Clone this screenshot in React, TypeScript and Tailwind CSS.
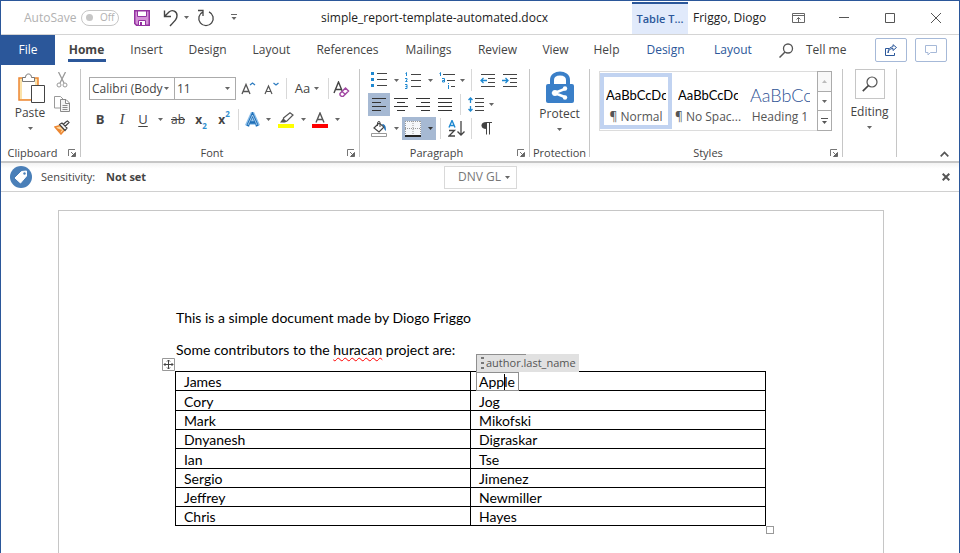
import React from "react";

const sans = "font-['Open_Sans','Noto_Sans',sans-serif]";
const body = "font-['Lato','Open_Sans',sans-serif]";

function Icon({ w, h, children }: { w: number; h: number; children: React.ReactNode }) {
  return (
    <svg width={w} height={h} viewBox={`0 0 ${w} ${h}`} fill="none" className="block shrink-0" aria-hidden="true">
      {children}
    </svg>
  );
}

function Caret({ color = "#666" }: { color?: string }) {
  return (
    <Icon w={5} h={3}>
      <path d="M0 0h5L2.5 3z" fill={color} />
    </Icon>
  );
}

function Tool({ label, width = "w-[22px]", on = false, children }: { label: string; width?: string; on?: boolean; children: React.ReactNode }) {
  return (
    <button
      type="button"
      aria-label={label}
      title={label}
      className={`flex h-full shrink-0 items-center justify-center ${width} ${on ? "bg-[#a6b9d3]" : ""}`}
    >
      {children}
    </button>
  );
}

function Sep({ width }: { width: string }) {
  return (
    <div className={`flex h-full shrink-0 justify-center py-px ${width}`}>
      <div className="w-px bg-[#d8d8d8]" />
    </div>
  );
}

function Launcher({ label }: { label: string }) {
  return (
    <button type="button" aria-label={label} className="flex w-4 items-center justify-center">
      <Icon w={8} h={8}>
        <path d="M.5 7V.5H7M3 3l4 4" stroke="#777" />
        <path d="M7.500 3.500v4h-4z" fill="#666" stroke="#666" />
      </Icon>
    </button>
  );
}

function Group({ name, width, launcher = false, children }: { name: string; width: string; launcher?: boolean; children: React.ReactNode }) {
  return (
    <section aria-label={name} className={`flex h-full shrink-0 ${width}`}>
      <div className="flex min-w-0 flex-1 flex-col">
        <div className="min-h-0 flex-1">{children}</div>
        <div className="flex h-4 text-[11px] leading-4 text-[#444]">
          <span className="flex-1 text-center whitespace-nowrap">{name === "Editing" ? "" : name}</span>
          {launcher && <Launcher label={`${name} settings`} />}
        </div>
      </div>
      <div className="mt-1 mb-1 w-px bg-[#c6c6c6]" />
    </section>
  );
}

function Combo({ label, value, width }: { label: string; value: string; width: string }) {
  return (
    <div className={`relative h-[23px] border border-[#ababab] ${width}`}>
      <select aria-label={label} className="block h-full w-full appearance-none bg-transparent pr-2 pl-[2px] text-[12px] leading-5 text-[#444] outline-none">
        <option>{value}</option>
      </select>
      <span className="pointer-events-none absolute top-[9px] right-[5px]">
        <Caret />
      </span>
    </div>
  );
}

const tabs = [
  { name: "Home", width: "w-[63px]" },
  { name: "Insert", width: "w-[57px]" },
  { name: "Design", width: "w-[65px]" },
  { name: "Layout", width: "w-[63px]" },
  { name: "References", width: "w-[89px]" },
  { name: "Mailings", width: "w-[73px]" },
  { name: "Review", width: "w-[65px]" },
  { name: "View", width: "w-[51px]" },
  { name: "Help", width: "w-[51px]" },
];

const people = [
  { first: "James", last: "Apple", height: "h-[19px]" },
  { first: "Cory", last: "Jog", height: "h-5" },
  { first: "Mark", last: "Mikofski", height: "h-[19px]" },
  { first: "Dnyanesh", last: "Digraskar", height: "h-[19px]" },
  { first: "Ian", last: "Tse", height: "h-5" },
  { first: "Sergio", last: "Jimenez", height: "h-[19px]" },
  { first: "Jeffrey", last: "Newmiller", height: "h-[19px]" },
  { first: "Chris", last: "Hayes", height: "h-[19px]" },
];

function TitleBar() {
  return (
    <header className="flex h-[34px] shrink-0 border-b border-[#d4d4d4] text-[12px] text-[#222]">
      <div className="flex w-60 shrink-0 items-center pl-[23px]">
        <label className="flex items-center text-[#b1b1b1]">
          <span className="w-[57px]">AutoSave</span>
          <input type="checkbox" role="switch" className="sr-only" />
          <span className="flex h-4 w-[38px] items-center gap-[7px] rounded-full border border-[#c6c6c6] pl-1 text-[10px]">
            <span className="h-[7px] w-[7px] rounded-full bg-[#c6c6c6]" />
            Off
          </span>
        </label>
        <button type="button" aria-label="Save" className="ml-[15px]">
          <Icon w={16} h={16}>
            <path d="M.75.75h14.500v14.500H2.500L.75 13.500z" fill="#d592d8" stroke="#9332a0" strokeWidth="1.500" />
            <path d="M3.500 1h9v5.500h-9z" fill="#fff" stroke="#9332a0" />
            <path d="M4.500 10.500h7v5h-7z" fill="#fff" stroke="#9332a0" />
            <path d="M6 12h2v3H6z" fill="#9332a0" />
          </Icon>
        </button>
        <button type="button" aria-label="Undo" className="ml-[13px]">
          <Icon w={17} h={18}>
            <path d="M1.500 1.500v6H8M2 7l4-4c3.500-3 8-.5 8 3.500 0 3-1 4-7 10.500" stroke="#444" strokeWidth="1.400" />
          </Icon>
        </button>
        <button type="button" aria-label="Undo history" className="ml-1">
          <Caret />
        </button>
        <button type="button" aria-label="Redo" className="ml-2">
          <Icon w={18} h={18}>
            <path d="M1 1.500h5v5.500M6 2.800A7.200 7.200 0 1 0 12 2.800" stroke="#444" strokeWidth="1.300" />
          </Icon>
        </button>
        <button type="button" aria-label="Customize toolbar" className="ml-4">
          <Icon w={6} h={7}>
            <path d="M0 .5h6" stroke="#666" />
            <path d="M.5 3h5L3 6z" fill="#666" />
          </Icon>
        </button>
      </div>
      <h1 className="flex-1 self-center pr-1 text-center text-[12px] whitespace-nowrap">simple_report-template-automated.docx</h1>
      <div className="mt-px flex w-14 shrink-0 items-center justify-center border-t-2 border-[#2b579a] bg-[#e1eafb] text-[11px] font-semibold whitespace-nowrap text-[#2b579a]">Table T...</div>
      <div className="w-[87px] shrink-0 self-center pl-[5px] whitespace-nowrap">Friggo, Diogo</div>
      <div className="flex w-[184px] shrink-0">
        <button type="button" aria-label="Ribbon display options" className="flex w-[46px] items-center justify-center">
          <Icon w={13} h={10}>
            <path d="M.5.5h12v9H.5zM.5 2.500h12M6.500 9V4.500M4.500 6.500l2-2 2 2" stroke="#666" />
          </Icon>
        </button>
        <button type="button" aria-label="Minimize" className="flex w-[46px] items-center justify-center">
          <Icon w={10} h={1}>
            <path d="M0 .5h10" stroke="#555" />
          </Icon>
        </button>
        <button type="button" aria-label="Maximize" className="flex w-[46px] items-center justify-center">
          <Icon w={10} h={10}>
            <path d="M.5.5h9v9h-9z" stroke="#555" />
          </Icon>
        </button>
        <button type="button" aria-label="Close" className="flex w-[46px] items-center justify-center">
          <Icon w={10} h={10}>
            <path d="M0 0l10 10M10 0L0 10" stroke="#555" />
          </Icon>
        </button>
      </div>
    </header>
  );
}

function TabBar() {
  return (
    <nav className="flex h-[30px] shrink-0 text-[12px] text-[#444]">
      <button type="button" className="w-[54px] shrink-0 bg-[#2b579a] text-white">File</button>
      {tabs.map((t, i) => (
        <button key={t.name} type="button" className={`flex shrink-0 flex-col items-center justify-center ${t.width} ${i === 0 ? "pt-[3px] font-bold" : ""}`}>
          {t.name}
          {i === 0 && <span className="h-[3px] w-[38px] bg-[#2b579a]" />}
        </button>
      ))}
      <button type="button" className="w-[67px] shrink-0 text-[#2b579a]">Design</button>
      <button type="button" className="w-[68px] shrink-0 text-[#2b579a]">Layout</button>
      <button type="button" className="ml-3 flex items-center gap-3">
        <Icon w={15} h={15}>
          <circle cx="9" cy="5.500" r="4.500" stroke="#555" strokeWidth="1.300" />
          <path d="M6 9L.5 14.500" stroke="#555" strokeWidth="1.500" />
        </Icon>
        Tell me
      </button>
      <div className="mr-3 ml-auto flex items-center gap-2">
        <button type="button" aria-label="Share" className="flex h-6 w-8 items-center justify-center rounded-xs border border-[#a6b9d8]">
          <Icon w={12} h={12}>
            <path d="M4 4.500H.5v7h9V9M3 9c.5-3 2-4.500 5-4.500V6.500L11.500 3.500 8 .7v2C5 3 3 5 3 9z" stroke="#2b579a" />
          </Icon>
        </button>
        <button type="button" aria-label="Comments" className="flex h-6 w-8 items-center justify-center rounded-xs border border-[#a6b9d8]">
          <Icon w={12} h={11}>
            <path d="M.5.5h11v7h-6l-2.500 2.500V7.500H.5z" stroke="#a6b9d8" />
          </Icon>
        </button>
      </div>
    </nav>
  );
}

function ClipboardGroup() {
  return (
    <Group name="Clipboard" width="w-20" launcher>
      <div className="flex pt-1">
        <button type="button" className="flex w-[51px] flex-col items-center pt-1 pl-[7px] text-[12px] leading-4 text-[#444]">
          <span className="pl-1">
            <Icon w={28} h={31}>
              <path d="M1 5h19v22H1z" fill="#fbe2a8" stroke="#ed8733" strokeWidth="1.500" />
              <path d="M4 7h13v19H4z" fill="#fff" />
              <path d="M4.500 8.500v-4h3c0-2 1-3.500 3-3.500s3 1.500 3 3.500h3v4z" fill="#fff" stroke="#777" />
              <path d="M13.500 12.500h13v17h-13z" fill="#fff" stroke="#444" />
            </Icon>
          </span>
          <span className="mt-px">Paste</span>
          <span className="pt-[6px]">
            <Caret />
          </span>
        </button>
        <div className="flex w-5 flex-col items-center gap-2 pt-[3px]">
          <button type="button" aria-label="Cut">
            <Icon w={12} h={16}>
              <path d="M2.500 0l5.500 11M9.500 0L4 11" stroke="#9a9a9a" strokeWidth="1.300" />
              <circle cx="3" cy="13" r="2" stroke="#9a9a9a" />
              <circle cx="9" cy="13" r="2" stroke="#9a9a9a" />
            </Icon>
          </button>
          <button type="button" aria-label="Copy">
            <Icon w={16} h={16}>
              <path d="M.5.5h6l2.500 2.500v9H.5z" fill="#fff" stroke="#9a9a9a" />
              <path d="M6.500 3.500h5.500l3.500 3.500v8.500h-9zM11.500 3.500V7.500h4M8.500 9.500h5M8.500 11.500h5M8.500 13.500h5" fill="#f4f4f4" stroke="#8a8a8a" />
            </Icon>
          </button>
          <button type="button" aria-label="Format painter">
            <Icon w={16} h={15}>
              <path d="M1 7l5-1.500 4.500 4.500L7 14z" fill="#fbd9a0" stroke="#ed8733" strokeWidth="1.500" />
              <path d="M2 8l6 2-2 3z" fill="#ed8733" />
              <path d="M5.500 4.500L8 3l5 5-2 2.500zM9 4.500l3.500-3 1-.5 1.500 1.500-4 4" fill="#fff" stroke="#444" strokeWidth="1.200" />
            </Icon>
          </button>
        </div>
      </div>
    </Group>
  );
}

function FontGroup() {
  return (
    <Group name="Font" width="w-[279px]" launcher>
      <div className="pt-3 pl-2 text-[#444]">
        <div className="flex h-[23px]">
          <div className="flex w-[147px]">
            <Combo label="Font name" value="Calibri (Body" width="w-[86px]" />
            <Combo label="Font size" value="11" width="-ml-px w-[62px]" />
          </div>
          <Tool label="Grow font" width="w-6">
            <Icon w={15} h={14}>
              <path d="M1 12L5 2.500 9 12M2.500 9.500h5" stroke="#555" strokeWidth="1.300" />
              <path d="M9 3l2.500-2L14 3" stroke="#2e7cc0" strokeWidth="1.300" />
            </Icon>
          </Tool>
          <Tool label="Shrink font">
            <Icon w={15} h={14}>
              <path d="M1 12L4.500 4 8 12M2.500 9.500h4" stroke="#555" strokeWidth="1.200" />
              <path d="M9.500 1L12 3l2.500-2" stroke="#2e7cc0" strokeWidth="1.300" />
            </Icon>
          </Tool>
          <Sep width="w-2" />
          <Tool label="Change case" width="w-[34px]">
            <span className="mr-1 text-[13px]">Aa</span>
            <Caret />
          </Tool>
          <Sep width="w-2" />
          <Tool label="Clear formatting" width="w-[18px]">
            <Icon w={17} h={16}>
              <path d="M1 12L5.500 1 10 12M2.500 8.500h6" stroke="#444" strokeWidth="1.400" />
              <path d="M7 12.500L12.500 7l3 3L10 15.500H8.500L7 14z" fill="#fff" stroke="#a349a4" strokeWidth="1.500" />
              <path d="M9 10.500l3.500 3" stroke="#a349a4" strokeWidth="1.500" />
            </Icon>
          </Tool>
        </div>
        <div className="mt-2 flex h-[23px]">
          <Tool label="Bold"><b className="text-[13px]">B</b></Tool>
          <Tool label="Italic"><i className="font-['Liberation_Serif',serif] text-[15px]">I</i></Tool>
          <Tool label="Underline" width="w-5"><span className="text-[13px] underline underline-offset-2">U</span></Tool>
          <Tool label="Underline style" width="w-3.5"><Caret /></Tool>
          <Tool label="Strikethrough"><span className="text-[12px] line-through">ab</span></Tool>
          <Tool label="Subscript" width="w-6"><b className="text-[12px]">x</b><b className="mt-3 text-[8px] text-[#2e8fd0]">2</b></Tool>
          <Tool label="Superscript"><b className="text-[12px]">x</b><b className="mb-3 text-[8px] text-[#2e8fd0]">2</b></Tool>
          <Sep width="w-1.5" />
          <Tool label="Text effects">
            <Icon w={15} h={16}>
              <path d="M2 14L7.500 2 13 14M4 10.500h7" stroke="#8fc0ea" strokeWidth="4.500" />
              <path d="M2.500 14L7.500 2.500 12.500 14M4.500 10.500h6" stroke="#1e6fb8" strokeWidth="2.500" />
              <path d="M3 13L7.500 3 12 13" stroke="#d9ebf9" strokeWidth=".7" />
            </Icon>
          </Tool>
          <Tool label="Text effects menu" width="w-2.5"><Caret /></Tool>
          <Tool label="Highlight color" width="w-[26px]">
            <Icon w={16} h={16}>
              <path d="M0 12h16v4H0z" fill="#ff0" />
              <path d="M5.500 6L12 .8 15 3 9 9 6 9.500z" fill="#fff" stroke="#555" strokeWidth="1.200" />
              <path d="M5 6.500l4 3-2 1H2z" fill="#555" />
            </Icon>
          </Tool>
          <Tool label="Highlight menu" width="w-2"><Caret /></Tool>
          <Tool label="Font color" width="w-[26px]">
            <Icon w={16} h={16}>
              <path d="M0 12h16v4H0z" fill="#f00" />
              <path d="M4 10.500L8 1l4 9.500M5.500 7.500h5" stroke="#555" strokeWidth="1.400" />
            </Icon>
          </Tool>
          <Tool label="Font color menu" width="w-2"><Caret /></Tool>
        </div>
      </div>
    </Group>
  );
}

function ParagraphGroup() {
  return (
    <Group name="Paragraph" width="w-[170px]" launcher>
      <div className="flex flex-col gap-px pt-[3px] pl-2">
        <div className="flex h-6">
          <Tool label="Bullets">
            <Icon w={16} h={16}>
              <path d="M0 0h3v3H0zM0 6h3v3H0zM0 12h3v3H0z" fill="#1e88d0" />
              <path d="M6 1.500h10M6 7.500h10M6 13.500h10" stroke="#444" />
            </Icon>
          </Tool>
          <Tool label="Bullets menu" width="w-3"><Caret /></Tool>
          <Tool label="Numbering">
            <Icon w={16} h={17}>
              <path d="M.5 1.500l1-1V4M0 6.500h2v1.500L.5 9.500h2M0 12.500h2v4H0M.5 14.500H2" stroke="#1e88d0" />
              <path d="M6 2.500h10M6 8.500h10M6 14.500h10" stroke="#444" />
            </Icon>
          </Tool>
          <Tool label="Numbering menu" width="w-3"><Caret /></Tool>
          <Tool label="Multilevel list">
            <Icon w={16} h={17}>
              <path d="M.5 1.500l1-1V4M3 6.500h2.500v3.500H3.500V8.500h2M9.500 11v1M9.500 13v4" stroke="#1e88d0" />
              <path d="M4 2.500h12M8 8.500h8M12 14.500h4" stroke="#444" />
            </Icon>
          </Tool>
          <Tool label="Multilevel menu" width="w-2"><Caret /></Tool>
          <Sep width="w-2.5" />
          <Tool label="Decrease indent">
            <Icon w={15} h={13}>
              <path d="M1 .5h14M8 4.500h7M8 8.500h7M1 12.500h14" stroke="#444" />
              <path d="M1 6.500h6M3.500 4L1 6.500 3.500 9" stroke="#1e88d0" strokeWidth="1.300" />
            </Icon>
          </Tool>
          <Tool label="Increase indent">
            <Icon w={15} h={13}>
              <path d="M1 .5h14M8 4.500h7M8 8.500h7M1 12.500h14" stroke="#444" />
              <path d="M0 6.500h6M3.500 4L6 6.500 3.500 9" stroke="#1e88d0" strokeWidth="1.300" />
            </Icon>
          </Tool>
        </div>
        <div className="flex h-[23px]">
          <Tool label="Align left" on>
            <Icon w={14} h={13}><path d="M0 .5h14M0 4.500h9M0 8.500h14M0 12.500h9" stroke="#333" /></Icon>
          </Tool>
          <Tool label="Center">
            <Icon w={14} h={13}><path d="M0 .5h14M3 4.500h8M0 8.500h14M3 12.500h8" stroke="#333" /></Icon>
          </Tool>
          <Tool label="Align right">
            <Icon w={14} h={13}><path d="M0 .5h14M5 4.500h9M0 8.500h14M5 12.500h9" stroke="#333" /></Icon>
          </Tool>
          <Tool label="Justify">
            <Icon w={14} h={13}><path d="M0 .5h14M0 4.500h14M0 8.500h14M0 12.500h14" stroke="#333" /></Icon>
          </Tool>
          <Sep width="w-2" />
          <Tool label="Line spacing" width="w-6">
            <Icon w={16} h={15}>
              <path d="M7 1.500h9M7 5.500h9M7 9.500h9M7 13.500h9" stroke="#444" />
              <path d="M2.500 1v5M.5 3l2-2 2 2M2.500 9v5M.5 12l2 2 2-2" stroke="#1e88d0" strokeWidth="1.300" />
            </Icon>
          </Tool>
          <Tool label="Line spacing menu" width="w-1.5"><Caret /></Tool>
        </div>
        <div className="flex h-[23px]">
          <Tool label="Shading">
            <Icon w={17} h={16}>
              <path d="M.5 12.500h15v3H.5z" fill="#fff" stroke="#999" />
              <path d="M3 7l5-5 5 4-5 5z" fill="#fff" stroke="#444" strokeWidth="1.200" />
              <path d="M6.500 5V1.500C7 0 9 0 9 1.500V6" stroke="#444" />
              <path d="M11 3c3 0 4 2 4 7-2-1-2-3-2-4z" fill="#2272b8" />
            </Icon>
          </Tool>
          <Tool label="Shading menu" width="w-3"><Caret /></Tool>
          <Tool label="Borders" on>
            <Icon w={16} h={16}>
              <path d="M0 0h16v15H0z" fill="#f5f7fa" />
              <path d="M.5 0v14M15.500 0v14M8 0v14M0 .5h16M0 7.500h16" stroke="#999" strokeDasharray="1 1" />
              <path d="M0 15h16" stroke="#222" strokeWidth="2" />
            </Icon>
          </Tool>
          <Tool label="Borders menu" width="w-3" on><Caret color="#333" /></Tool>
          <Sep width="w-2" />
          <Tool label="Sort" width="w-6">
            <Icon w={17} h={17}>
              <path d="M1 7.500L4 .5l3 7M2 5.500h4" stroke="#1e88d0" strokeWidth="1.400" />
              <path d="M1 10.500h5.500L1 16h6" stroke="#444" strokeWidth="1.300" />
              <path d="M13 1v14M9.500 11.500L13 15l3.500-3.500" stroke="#444" strokeWidth="1.300" />
            </Icon>
          </Tool>
          <Sep width="w-1.5" />
          <Tool label="Show marks" width="w-6">
            <Icon w={11} h={13}>
              <path d="M5 .5h6M5.500 0v12.500M8.500 0v12.500" stroke="#444" />
              <path d="M5.500 0C2 0 .5 1.500.5 3.500S2 7 5.500 7z" fill="#444" />
            </Icon>
          </Tool>
        </div>
      </div>
    </Group>
  );
}

function ProtectionGroup() {
  return (
    <Group name="Protection" width="w-[60px]">
      <button type="button" className="flex w-full flex-col items-center pt-1.5 text-[12px] leading-4 text-[#444]">
        <Icon w={28} h={32}>
          <path d="M6 14V9C6 .2 22 .2 22 9v5" stroke="#3a7fc8" strokeWidth="4" />
          <rect x="0" y="13" width="28" height="19" rx="2" fill="#3a7fc8" />
          <path d="M20 17.500L8.500 22 20 26.500" stroke="#fff" strokeWidth="2.500" />
          <circle cx="19" cy="17.500" r="2.200" fill="#fff" />
          <circle cx="9" cy="22" r="3" fill="#fff" />
          <circle cx="19" cy="26.500" r="2.200" fill="#fff" />
        </Icon>
        <span className="mt-[3px]">Protect</span>
        <span className="pt-[6px]">
          <Caret />
        </span>
      </button>
    </Group>
  );
}

function StyleCard({ sample, name, on = false, heading = false }: { sample: string; name: string; on?: boolean; heading?: boolean }) {
  return (
    <button type="button" className={`flex h-14 w-[72px] shrink-0 flex-col justify-end border-4 ${on ? "border-[#c1d3f1]" : "border-transparent"}`}>
      <span className={`h-7 w-[60px] self-center overflow-hidden text-left leading-7 whitespace-nowrap ${body} ${heading ? "text-[18px] font-light text-[#2f5496]" : "text-[13px] text-black"}`}>{sample}</span>
      <span className="self-center text-[12px] leading-4 whitespace-nowrap text-[#555]">{name}</span>
    </button>
  );
}

function StylesGroup() {
  return (
    <Group name="Styles" width="w-[253px]" launcher>
      <div className="flex pt-1.5 pl-[9px]">
        <div className="flex h-[60px] w-[218px] items-center overflow-hidden border border-r-0 border-[#dcdcdc]">
          <StyleCard sample="AaBbCcDc" name="¶ Normal" on />
          <StyleCard sample="AaBbCcDc" name="¶ No Spac..." />
          <StyleCard sample="AaBbCc" name="Heading 1" heading />
        </div>
        <div className="flex h-[60px] w-[15px] flex-col divide-y divide-[#ababab] border border-[#ababab]">
          <button type="button" aria-label="Previous styles" className="flex flex-1 items-center justify-center bg-[#f8f8f8]">
            <Icon w={5} h={3}><path d="M0 3h5L2.500 0z" fill="#bbb" /></Icon>
          </button>
          <button type="button" aria-label="Next styles" className="flex flex-1 items-center justify-center"><Caret /></button>
          <button type="button" aria-label="All styles" className="flex flex-1 items-center justify-center">
            <Icon w={7} h={6}>
              <path d="M0 .5h7" stroke="#555" />
              <path d="M1 3h5L3.500 6z" fill="#555" />
            </Icon>
          </button>
        </div>
      </div>
    </Group>
  );
}

function EditingGroup() {
  return (
    <Group name="Editing" width="w-[54px]">
      <button type="button" className="flex w-full flex-col items-center pt-1 text-[12px] leading-4 text-[#444]">
        <span className="flex h-[30px] w-[30px] items-center justify-center border border-[#c6c6c6]">
          <Icon w={16} h={16}>
            <circle cx="10" cy="6" r="5" stroke="#555" strokeWidth="1.200" />
            <path d="M6.500 9.500L.8 15.200" stroke="#444" strokeWidth="1.700" />
          </Icon>
        </span>
        <span className="mt-[5px]">Editing</span>
        <span className="pt-[6px]">
          <Caret />
        </span>
      </button>
    </Group>
  );
}

function SensitivityBar() {
  return (
    <div className="flex h-[29px] shrink-0 items-center border-b border-[#d0d0d0] bg-linear-to-b from-[#f3f3f3] to-white to-20% text-[12px] text-[#444]">
      <div className="flex flex-1 items-center pl-[9px]">
        <Icon w={22} h={22}>
          <circle cx="11" cy="11" r="11" fill="#4a7fb8" />
          <path d="M5 12l6.500-6.500 5-.5v5L10.500 17z" fill="#fff" stroke="#fff" strokeLinejoin="round" />
          <circle cx="14.500" cy="7.500" r="1.200" fill="#4a7fb8" />
        </Icon>
        <span className="w-[65px] pl-[9px] text-[11px]">Sensitivity:</span>
        <b className="pl-[9px] text-[11px]">Not set</b>
      </div>
      <button type="button" className="flex h-[23px] w-[73px] items-center justify-center gap-1 border border-[#d9d9d9] bg-white pl-2 whitespace-nowrap text-[#777]">
        DNV GL
        <Caret />
      </button>
      <div className="flex flex-1 justify-end pr-[9px]">
        <button type="button" aria-label="Close bar">
          <Icon w={8} h={8}><path d="M.7.7l6.600 6.600M7.300.7L.7 7.300" stroke="#555" strokeWidth="2" /></Icon>
        </button>
      </div>
    </div>
  );
}

function AuthorField({ value }: { value: string }) {
  return (
    <span className="relative">
      {value}
      <span className="absolute -top-px -left-[3px] h-[19px] w-[43px] border border-[#8f8f8f]" />
      <span className="absolute top-px left-[25px] h-4 w-px bg-black" />
      <span className={`absolute -top-[19px] -left-[3px] flex h-[18px] items-center border-l border-[#8f8f8f] bg-[#e1e1e1] pr-[3px] pl-1 text-[11px] leading-4 text-[#555] ${sans}`}>
        <span className="absolute top-0 left-0 h-px w-[49px] bg-[#8f8f8f]" />
        <Icon w={4} h={12}>
          <path d="M0 1h3M0 6h3M0 11h3" stroke="#777" strokeWidth="2" />
        </Icon>
        <span className="pl-px">author.last_name</span>
      </span>
    </span>
  );
}

function Page() {
  return (
    <article className={`mt-[18px] mr-[75px] ml-[57px] flex-1 border border-b-0 border-[#c6c6c6] pr-[117px] pl-[116px] text-[14px] leading-[18px] text-black ${body}`}>
      <p className="mt-[98px] pl-px">This is a simple document made by Diogo Friggo</p>
      <p className="mt-3.5 pl-px">
        Some contributors to the{" "}
        <span className="underline decoration-[#f00] decoration-wavy decoration-1 underline-offset-2">huracan</span> project are:
      </p>
      <div className="relative mt-3">
        <table className="w-full table-fixed border-separate border-spacing-0 border-t border-l border-black leading-4">
          <tbody>
            {people.map((p, i) => (
              <tr key={p.first} className={p.height}>
                <td className="border-r border-b border-black p-0 pt-0.5 pl-2">{p.first}</td>
                <td className="border-r border-b border-black p-0 pt-0.5 pl-2">{i === 0 ? <AuthorField value={p.last} /> : p.last}</td>
              </tr>
            ))}
          </tbody>
        </table>
        <span className="absolute -top-[13px] -left-[13px]">
          <Icon w={13} h={13}>
            <path d="M.5.500h12v12H.5z" fill="#fff" stroke="#999" />
            <path d="M6.500 2v9M2 6.500h9M5 3.500l1.500-1.500L8 3.500M5 9.500L6.500 11 8 9.500M3.500 5L2 6.500 3.500 8M9.500 5L11 6.500 9.500 8" stroke="#444" />
          </Icon>
        </span>
        <span className="absolute -right-2 -bottom-2 h-2 w-2 border border-[#999] bg-white" />
      </div>
    </article>
  );
}

export default function App() {
  return (
    <div className={`flex h-screen flex-col overflow-hidden border border-b-0 border-[#2b579a] bg-white ${sans}`}>
      <TitleBar />
      <TabBar />
      <div className="flex h-[98px] shrink-0 border-b-2 border-[#c6c6c6]">
        <ClipboardGroup />
        <FontGroup />
        <ParagraphGroup />
        <ProtectionGroup />
        <StylesGroup />
        <EditingGroup />
        <button type="button" aria-label="Collapse ribbon" className="mr-2.5 mb-1 ml-auto self-end">
          <Icon w={9} h={6}><path d="M.7 5.300L4.500 1.500l3.800 3.800" stroke="#555" strokeWidth="1.700" /></Icon>
        </button>
      </div>
      <SensitivityBar />
      <main className="flex min-h-0 flex-1 flex-col">
        <Page />
      </main>
    </div>
  );
}
